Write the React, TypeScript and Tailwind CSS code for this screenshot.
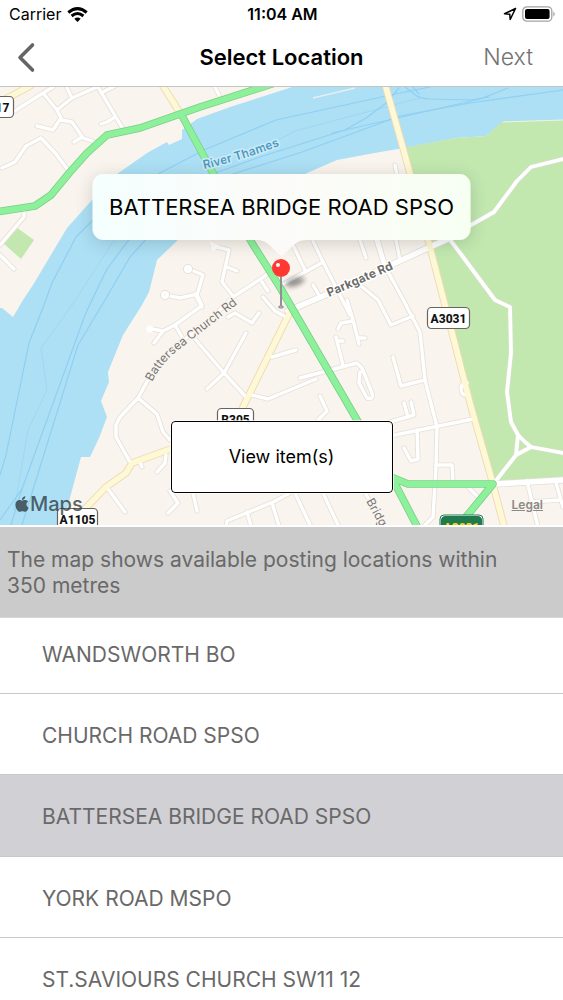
import { FaApple } from "react-icons/fa";

const LOCATIONS = [
  "WANDSWORTH BO",
  "CHURCH ROAD SPSO",
  "BATTERSEA BRIDGE ROAD SPSO",
  "YORK ROAD MSPO",
  "ST.SAVIOURS CHURCH SW11 12",
];
const SELECTED = 2;

const RIVER =
  "M0 308 L2 308 L13 317 L23 300 L33 285 L67 228 L92 200 L117 174 L147 153 L167 142 L169 145 L182 139 L182 130 L197 119 L230 107 L283 90 L292 87 H563 V120 L503 122 L486 136 L456 138 L410 147 L380 152 L337 160 L307 173 L180 238 L157 260 L149 292 L142 305 L123 335 L108 372 L109 382 L101 401 L107 417 L99 438 L90 457 L81 457 L68 505 L62 527 H0 Z";

const PARK =
  "M402 148 L456 138 L486 136 L503 121 L563 120 V480 L495 483 L470 403 L443 300 L430 247 Z";

const CURRENTS = [
  "M0 475 L6 455 L29 343 L44 305 L52 283 L76 237 L92 221 L160 173 L204 150 L276 120 L400 93 L430 87",
  "M0 520 L22 489 L85 315 L92 300 L107 269 L127 242 L190 182 L260 157 L345 130 L366 118 L385 104 L399 88",
  "M11 525 L22 489",
  "M22 525 L78 345 L105 300 L130 257 L150 235 L230 175 L302 152 L400 116 L470 103 L563 90",
  "M332 133 L380 122 L480 99 L508 88",
  "M405 87 L414 94 Q420 99 430 99 L471 100 L489 97",
  "M413 87 L419 94",
];
const FAINT_CURRENTS = [
  "M14 510 L28 430 L47 390 L41 348 L75 301 L112 243 L190 176",
  "M278 140 L295 131 L363 113 L420 98",
];

const STREETS = [
  "M13 112 L43 93 L53 87",
  "M43 93 L57 110 L61 118 L53 130 L37 126",
  "M57 110 L72 98 L97 87",
  "M66 86 L72 98",
  "M61 120 L72 122 L83 138 L95 142",
  "M82 137 L74 142",
  "M98 87 L123 129",
  "M101 93 L115 86",
  "M115 117 L107 122 L101 124",
  "M2 168 L15 162 L26 146 L41 138 L56 154 L68 170",
  "M24 210 L24 217 L0 245",
  "M0 255 L14 269",
  "M215 87 L219 95",
  "M189 269 L203 275 L197 295 L202 305",
  "M165 295 L180 298 L197 294",
  "M195 294 L202 307",
  "M213 246 L229 250 L222 282 L233 296",
  "M227 267 L237 271",
  "M138 398 L148 380 Q158 361 175 347 L214 316 L233 297 L265 276 L273 268",
  "M200 307 L175 325 L163 331 L152 329",
  "M163 331 L154 343",
  "M175 325 L182 337",
  "M262 282 L268 291",
  "M263 297 L275 311 L286 317",
  "M282 285 L323 262 L313 241",
  "M291 241 L305 270",
  "M323 262 L350 315",
  "M313 285 L320 297",
  "M378 240 L386 268 L406 305 L420 332 L425 380 L437 427 L436 467 L433 517 L423 527",
  "M396 240 L400 260",
  "M395 165 L397 176",
  "M376 240 L384 265",
  "M360 285 L378 300 L391 325 L413 316",
  "M360 240 L366 258",
  "M190 333 L224 373 L247 398",
  "M246 333 L224 373 L207 389",
  "M228 317 L235 313 L252 323 L259 313",
  "M272 357 L296 350",
  "M252 395 L268 399 L316 379",
  "M300 378 L357 363 L362 368 L372 393 Q374 400 367 398 L359 383 L360 372",
  "M343 365 L336 337 M337 341 L343 341",
  "M347 300 L353 320 L359 344",
  "M353 321 L341 323 L338 329",
  "M358 338 L365 338",
  "M320 396 L327 411 L318 420",
  "M193 493 L197 511",
  "M226 528 L227 521 L273 502 L290 493",
  "M247 512 L251 526",
  "M272 503 L279 526",
  "M295 493 L311 527",
  "M323 493 L339 527",
  "M365 493 L368 498",
  "M393 357 L401 386 L425 380",
  "M390 422 L414 415 L411 402",
  "M404 403 L408 417",
  "M390 436 L473 419",
  "M417 430 L418 459 L411 461 L404 448",
  "M436 465 L452 465 L453 481",
  "M469 488 L478 497",
  "M467 383 Q461 384 461 388 Q461 396 467 395",
  "M138 398 L120 417 L116 425 L116 437 L130 462",
  "M138 398 L157 414 L163 432 L170 440",
  "M140 462 L142 467",
  "M166 455 L165 463 L157 472",
  "M108 489 L125 512",
  "M170 491 L178 503 L168 513",
  "M527 481 L538 527",
  "M556 483 L563 507",
  "M530 502 L560 500",
];

const PATHS = [
  "M450 237 L471 225 L494 212 L517 181 L531 167 L563 159",
  "M451 241 L463 257 L495 300 L510 307 L511 353 L507 392 L511 422 L518 435 L525 442 L531 447 L563 453",
  "M518 435 L516 455 L495 482",
  "M531 447 L516 455",
];

const MAJOR_WHITE = ["M288 311 L323 296 L430 247 L452 237", "M495 484 L563 480"];

const YELLOW = [
  "M0 102 L30 86",
  "M163 86 L180 113",
  "M385 84 L403 148 L430 247 L445 305 L470 403 L491 477 L505 530",
  "M291 310 L243 407 L236 424",
  "M200 442 L168 450 L132 463 L126 473 L106 487 L80 514",
];

const GREEN = [
  "M-4 212 L35 206 L51 195 L70 172 L87 153 L107 135 L140 128 L180 114 L200 107 L272 84",
  "M181 114 L213 173 L252 243 L281 289 L357 420 L393 480 L420 532",
  "M391 477 L408 484 L493 484 L466 517 L458 528",
];

function Lines({ paths, stroke, width }: { paths: string[]; stroke: string; width: number }) {
  return (
    <g fill="none" stroke={stroke} strokeWidth={width} strokeLinecap="round" strokeLinejoin="round">
      {paths.map((d) => (
        <path key={d} d={d} />
      ))}
    </g>
  );
}

function Shield({ x, y, w, label, green }: { x: number; y: number; w: number; label: string; green?: boolean }) {
  return (
    <g>
      {green && <rect x={x - 1} y={y - 1} width={w + 2} height={23} rx={4} fill="#fff" stroke="#1f7a55" />}
      <rect
        x={x + 0.5}
        y={y + 0.5}
        width={w - 1}
        height={21}
        rx={4}
        fill={green ? "#1f7a4d" : "#fff"}
        stroke={green ? "#1f7a4d" : "#68645f"}
        strokeWidth={1.2}
      />
      <text
        x={x + w / 2}
        y={y + 16}
        textAnchor="middle"
        fontFamily="Roboto, 'Liberation Sans', sans-serif"
        fontWeight={800}
        fontSize={12}
        fill={green ? "#ffd60a" : "#111"}
      >
        {label}
      </text>
    </g>
  );
}

function MapDrawing() {
  return (
    <svg
      viewBox="0 87 563 438"
      preserveAspectRatio="xMidYMid slice"
      className="block h-full w-full"
      role="img"
      aria-label="Map of Battersea"
    >
      <defs>
        <filter id="soft" x="-50%" y="-50%" width="200%" height="200%">
          <feGaussianBlur stdDeviation="2.5" />
        </filter>
        <path id="church-road" d="M152 382 Q161 364 177 351 L217 320 L245 298" />
        <path id="parkgate-road" d="M329 297 L405 264" />
        <path id="thames" d="M204 169 Q240 161 284 144" />
        <path id="bridge-road" d="M366 501 L388 541" />
      </defs>
      <rect x="0" y="87" width="563" height="438" fill="#f9f4ed" />
      <path d={RIVER} fill="#ade0f5" />
      <path d={PARK} fill="#c2e8b0" />
      <path d="M16 227 L34 240 L21 259 L3 243 Z" fill="#c2e8b0" />
      <Lines paths={FAINT_CURRENTS} stroke="#9fd8ee" width={1} />
      <Lines paths={CURRENTS} stroke="#8fcff4" width={1.2} />
      <path d="M313 98 L355 88" stroke="#e6eef0" strokeWidth={1.3} />
      <path d="M503 122 L563 120" stroke="#edf1e8" strokeWidth={1} />

      <Lines paths={STREETS} stroke="#e5dfd8" width={5} />
      <Lines paths={PATHS} stroke="#d6dfcb" width={5} />
      <Lines paths={MAJOR_WHITE} stroke="#e2ddd5" width={7} />
      <Lines paths={YELLOW} stroke="#f2d9b0" width={7.4} />
      <Lines paths={STREETS} stroke="#fff" width={3.4} />
      <Lines paths={PATHS} stroke="#fff" width={3.8} />
      <Lines paths={MAJOR_WHITE} stroke="#fff" width={5.6} />
      <Lines paths={YELLOW} stroke="#fdf9d6" width={5.6} />
      <Lines paths={GREEN} stroke="#79cf87" width={7.6} />
      <Lines paths={GREEN} stroke="#8df19c" width={6} />

      <g fill="#f9f4ed" stroke="#e5dfd8" strokeWidth={5}>
        <circle cx="188" cy="269" r="2.5" />
        <circle cx="165" cy="295" r="2.5" />
      </g>
      <g fill="#f9f4ed" stroke="#fff" strokeWidth={3}>
        <circle cx="188" cy="269" r="2.5" />
        <circle cx="165" cy="295" r="2.5" />
      </g>
      <path d="M211 243 L218 246 L213 250 Z" fill="#fff" stroke="#fff" strokeWidth={2} />
      <circle cx="150" cy="329" r="3.4" fill="#fff" />

      <g
        fontFamily="Inter, 'Liberation Sans', sans-serif"
        fontSize={12}
        stroke="#f9f4ed"
        strokeWidth={3}
        strokeLinejoin="round"
        paintOrder="stroke"
      >
        <text fill="#777675" fontWeight={400}>
          <textPath href="#church-road">Battersea Church Rd</textPath>
        </text>
        <text fill="#6b6a69" fontWeight={700} stroke="#fff">
          <textPath href="#parkgate-road">Parkgate Rd</textPath>
        </text>
        <text fill="#4c9abf" fontWeight={600} stroke="#cdeaf7">
          <textPath href="#thames">River Thames</textPath>
        </text>
        <text fill="#777675" fontWeight={400}>
          <textPath href="#bridge-road">Bridge</textPath>
        </text>
      </g>

      <Shield x={-24} y={96} w={38} label="A217" />
      <Shield x={427} y={307} w={43} label="A3031" />
      <Shield x={217} y={408} w={37} label="B305" />
      <Shield x={57} y={508} w={41} label="A1105" />
      <Shield x={441} y={516} w={41} label="A3031" green />

      <ellipse cx="295" cy="282" rx="10" ry="4" fill="#000" opacity="0.42" filter="url(#soft)" transform="rotate(-18 295 282)" />
      <ellipse cx="281" cy="307" rx="2.5" ry="1" fill="none" stroke="#747474" />
      <path d="M281 277 V306" stroke="#929292" strokeWidth={2} />
      <circle cx="281" cy="268" r="9" fill="#ff3931" />
      <circle cx="278" cy="265" r="2" fill="#fff" />
    </svg>
  );
}

function StatusBar() {
  return (
    <div className="grid h-[28px] shrink-0 grid-cols-3 items-center pr-[7px] pl-[9px] text-[16px] leading-5">
      <div className="flex items-center gap-[6px]">
        <span>Carrier</span>
        <svg viewBox="0 0 21 15" className="h-[15px] w-[21px]" aria-label="Wi-Fi" fill="none" stroke="#000" strokeWidth="3">
          <path d="M1.3 5.5 Q10.5 -2.2 19.7 5.5" />
          <path d="M4.6 9 Q10.5 4 16.4 9" />
          <path d="M7.3 11.8 Q10.5 9 13.7 11.8 L10.5 15 Z" fill="#000" stroke="none" />
        </svg>
      </div>
      <span className="text-center font-semibold whitespace-nowrap">11:04 AM</span>
      <div className="flex items-center justify-end gap-[5px]">
        <svg viewBox="0 0 14 14" className="h-[14px] w-[14px]" aria-label="Location in use" fill="none" stroke="#000" strokeWidth="1.5" strokeLinejoin="round">
          <path d="M12.5 1.5 L1.5 6.7 L6.8 7.2 L7.2 12.5 Z" />
        </svg>
        <svg viewBox="0 0 34 16" className="h-[16px] w-[34px]" aria-label="Battery full">
          <rect x="0.8" y="0.8" width="29" height="14.4" rx="4" fill="none" stroke="#a3a3a3" strokeWidth="1.3" />
          <rect x="3" y="3" width="24.6" height="10" rx="2" fill="#000" />
          <path d="M31.4 5.5 Q34 8 31.4 10.5 Z" fill="#999" />
        </svg>
      </div>
    </div>
  );
}

export default function App() {
  return (
    <div className="flex h-screen flex-col overflow-hidden bg-white font-['Inter','Liberation_Sans',sans-serif] text-black">
      <StatusBar />
      <header className="grid h-[59px] shrink-0 grid-cols-[1fr_auto_1fr] items-center border-b border-[#c4c4c4]">
        <button type="button" aria-label="Back" className="ml-4 flex h-10 w-5 items-center justify-center">
          <svg viewBox="0 0 20 32" className="h-8 w-5" fill="none" stroke="#656565" strokeWidth="3.6" strokeLinecap="round" strokeLinejoin="round">
            <path d="M16.5 4 L4 16.5 L16.5 29" />
          </svg>
        </button>
        <h1 className="text-[22px] leading-7 font-semibold">Select Location</h1>
        <button type="button" className="mr-[30px] justify-self-end text-[23px] leading-7 font-light text-[#737373]">
          Next
        </button>
      </header>

      <section className="relative aspect-[563/438] w-full shrink-0 overflow-hidden">
        <MapDrawing />
        <div className="absolute bottom-[65%] left-1/2 flex h-[66px] -translate-x-1/2 items-center rounded-[11px] bg-linear-to-r from-[#f4fffe] via-[#fcfbf9] to-[#f7fff3] px-[17px] text-[22px] leading-7 whitespace-nowrap shadow-[0_3px_18px_rgba(0,0,0,0.16)]">
          BATTERSEA BRIDGE ROAD SPSO
          <svg viewBox="0 0 50 17" className="absolute top-full left-1/2 h-[17px] w-[50px] -translate-x-1/2" fill="#fbfaf8" aria-hidden="true">
            <path d="M0 0 C9 0 12 4 20 12 Q25 19 30 12 C38 4 41 0 50 0 Z" />
          </svg>
        </div>
        <button type="button" className="absolute bottom-8 left-1/2 h-[72px] w-[222px] -translate-x-1/2 rounded-[4px] border border-black bg-white text-[18px] leading-6 outline outline-white/70">
          View item(s)
        </button>
        <div className="absolute bottom-[7px] left-[14px] flex items-center text-[20px] leading-7 font-medium text-[#303d42]/80">
          <FaApple className="h-[18px] w-[16px]" aria-hidden="true" />
          <span>Maps</span>
        </div>
        <a href="#legal" className="absolute right-5 bottom-[12px] text-[12px] leading-4 font-semibold text-[#8c8a86] underline">
          Legal
        </a>
      </section>

      <p className="relative z-10 mt-[2px] shrink-0 border-b border-[#d6d6d6] bg-[#cbcbcb] pt-[20px] pr-10 pb-[18px] pl-[7px] text-[21px] leading-[26px] text-[#696969]">
        The map shows available posting locations within 350 metres
      </p>

      <ul className="-mt-[5px] min-h-0 flex-1 overflow-y-auto [scrollbar-width:none]">
        {LOCATIONS.map((name, i) => (
          <li key={name}>
            <button
              type="button"
              aria-pressed={i === SELECTED}
              className={
                i === SELECTED
                  ? "flex h-[82px] w-full items-center border-b border-[#c8c8c8] bg-[#d1d0d5] pt-[3px] pl-[42px] text-left text-[21px] leading-7 text-[#696969]"
                  : "flex h-[81px] w-full items-center border-b border-[#c8c8c8] bg-white pt-[3px] pl-[42px] text-left text-[21px] leading-7 text-[#696969]"
              }
            >
              {name}
            </button>
          </li>
        ))}
      </ul>
    </div>
  );
}
